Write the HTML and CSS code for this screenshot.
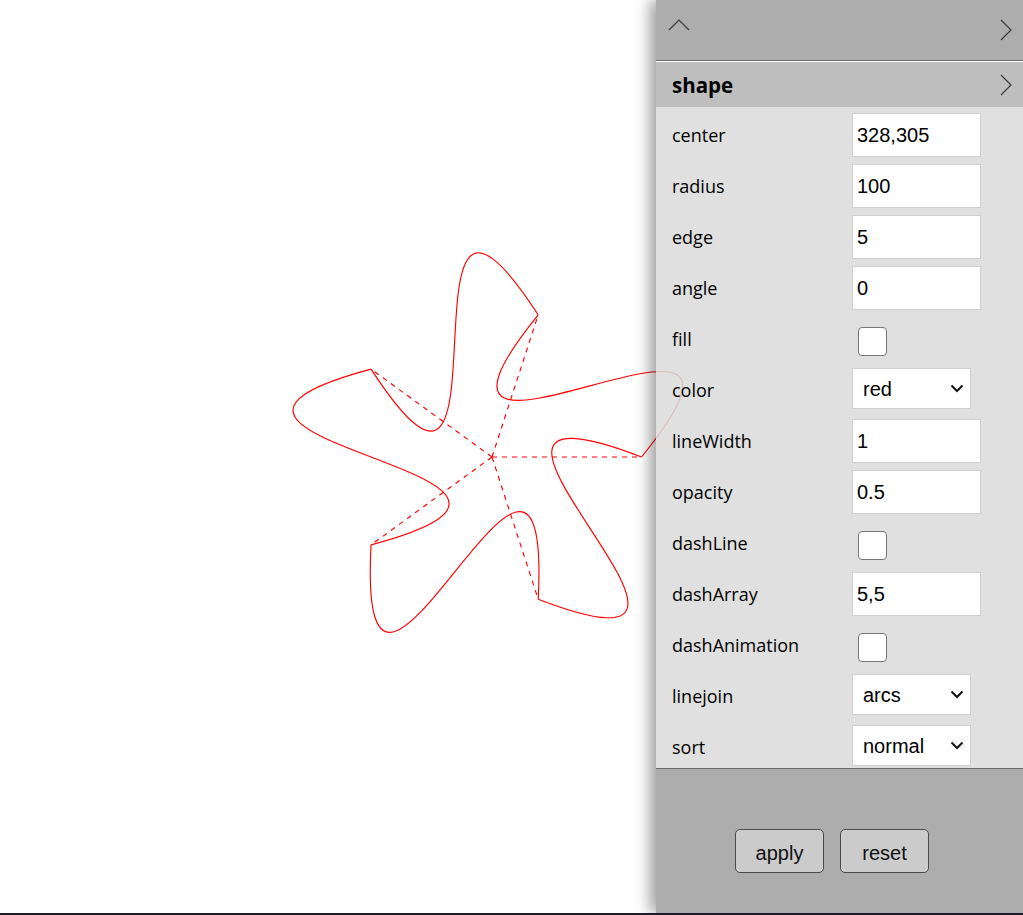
FILE: index.html
```html
<!DOCTYPE html>
<html lang="en">
<head>
<meta charset="utf-8">
<title>shape</title>
<link rel="stylesheet" href="styles.css">
</head>
<body>
<div class="stage">
  <svg class="canvas" width="1023" height="913" viewBox="0 0 1023 913">
    <defs>
      <path id="edge" d="M641.5 457 C380.1 356.7 799.6 699.5 538.2 599.2"/>
      <line id="spoke" x1="492" y1="457" x2="641.5" y2="457"/>
    </defs>
    <g class="outline">
      <use href="#edge"/>
      <use href="#edge" transform="rotate(72 492 457)"/>
      <use href="#edge" transform="rotate(144 492 457)"/>
      <use href="#edge" transform="rotate(216 492 457)"/>
      <use href="#edge" transform="rotate(288 492 457)"/>
    </g>
    <g class="spokes">
      <use href="#spoke"/>
      <use href="#spoke" transform="rotate(72 492 457)"/>
      <use href="#spoke" transform="rotate(144 492 457)"/>
      <use href="#spoke" transform="rotate(216 492 457)"/>
      <use href="#spoke" transform="rotate(288 492 457)"/>
    </g>
  </svg>

  <aside class="panel">
    <div class="topbar">
      <svg class="chev-up" width="22" height="12" viewBox="0 0 22 12"><polyline points="1,11 11,1 21,11"/></svg>
      <svg class="chev-right" width="12" height="22" viewBox="0 0 12 22"><polyline points="1,1 11,11 1,21"/></svg>
    </div>
    <div class="section-head">
      <span class="section-title">shape</span>
      <svg class="chev-right" width="12" height="22" viewBox="0 0 12 22"><polyline points="1,1 11,11 1,21"/></svg>
    </div>
    <div class="form">
      <div class="row"><label class="lbl">center</label><input class="txt" type="text" value="328,305"></div>
      <div class="row"><label class="lbl">radius</label><input class="txt" type="text" value="100"></div>
      <div class="row"><label class="lbl">edge</label><input class="txt" type="text" value="5"></div>
      <div class="row"><label class="lbl">angle</label><input class="txt" type="text" value="0"></div>
      <div class="row"><label class="lbl">fill</label><input class="chk" type="checkbox"></div>
      <div class="row"><label class="lbl">color</label>
        <span class="sel-wrap"><select class="sel"><option>red</option></select>
          <svg class="sel-arrow" width="14" height="9" viewBox="0 0 14 9"><polyline points="1.5,1.5 7,7 12.5,1.5"/></svg></span></div>
      <div class="row"><label class="lbl">lineWidth</label><input class="txt" type="text" value="1"></div>
      <div class="row"><label class="lbl">opacity</label><input class="txt" type="text" value="0.5"></div>
      <div class="row"><label class="lbl">dashLine</label><input class="chk" type="checkbox"></div>
      <div class="row"><label class="lbl">dashArray</label><input class="txt" type="text" value="5,5"></div>
      <div class="row"><label class="lbl">dashAnimation</label><input class="chk" type="checkbox"></div>
      <div class="row"><label class="lbl">linejoin</label>
        <span class="sel-wrap"><select class="sel"><option>arcs</option></select>
          <svg class="sel-arrow" width="14" height="9" viewBox="0 0 14 9"><polyline points="1.5,1.5 7,7 12.5,1.5"/></svg></span></div>
      <div class="row"><label class="lbl">sort</label>
        <span class="sel-wrap"><select class="sel"><option>normal</option></select>
          <svg class="sel-arrow" width="14" height="9" viewBox="0 0 14 9"><polyline points="1.5,1.5 7,7 12.5,1.5"/></svg></span></div>
    </div>
    <div class="actions">
      <button class="btn" type="button">apply</button>
      <button class="btn" type="button">reset</button>
    </div>
  </aside>
</div>
</body>
</html>
```

FILE: styles.css
```css
html {
  background: #1c1a2b;
}
body {
  margin: 0;
  height: 915px;
  overflow: hidden;
  background: #1c1a2b;
}
.stage {
  position: relative;
  width: 1023px;
  height: 913px;
  background: #ffffff;
  overflow: hidden;
}
.canvas {
  position: absolute;
  left: 0;
  top: 0;
  display: block;
}
.outline use {
  fill: none;
  stroke: #ff0000;
  stroke-width: 1.15;
}
.spokes use {
  fill: none;
  stroke: #ff0000;
  stroke-width: 1.15;
  stroke-dasharray: 5 5;
}

.panel {
  position: absolute;
  top: 0;
  right: 0;
  width: 367px;
  height: 913px;
  display: flex;
  flex-direction: column;
  box-shadow: -6px 0 14px rgba(0, 0, 0, 0.38);
  font-family: "Open Sans", "Noto Sans", sans-serif;
  color: #000;
}
.topbar {
  height: 61px;
  flex: none;
  box-sizing: border-box;
  background: rgba(159, 159, 159, 0.85);
  border-bottom: 1px solid #6b6b6b;
  display: flex;
  justify-content: space-between;
  align-items: flex-start;
  padding: 19px 11px 0 12px;
}
.chev-up polyline,
.chev-right polyline {
  fill: none;
  stroke: #3a3a3a;
  stroke-width: 1.2;
}
.chev-up {
  display: block;
}
.chev-right {
  display: block;
}
.section-head {
  height: 45px;
  flex: none;
  box-sizing: border-box;
  margin-top: 1px;
  background: rgba(179, 179, 179, 0.85);
  display: flex;
  align-items: center;
  justify-content: space-between;
  padding: 0 11px 0 16px;
}
.section-title {
  font-size: 20.5px;
  font-weight: 700;
  line-height: 1;
  padding-top: 2px;
}
.form {
  flex: 1;
  min-height: 0;
  overflow: hidden;
  background: rgba(218, 218, 218, 0.85);
  padding: 6px 0 0 16px;
}
.row {
  display: flex;
  align-items: flex-start;
  height: 44px;
  margin-bottom: 7px;
}
.lbl {
  width: 180px;
  flex: none;
  font-size: 18px;
  line-height: 44px;
}
.txt {
  width: 129px;
  height: 44px;
  box-sizing: border-box;
  margin: 0;
  border: 1px solid #cfcfcf;
  background: #fff;
  padding: 0 4px;
  font-family: "Liberation Sans", Arial, sans-serif;
  font-size: 20px;
  color: #000;
  outline: none;
}
.chk {
  appearance: none;
  -webkit-appearance: none;
  width: 29px;
  height: 29px;
  margin: 10px 0 0 6px;
  box-sizing: border-box;
  border: 1px solid #767676;
  border-radius: 4px;
  background: #fff;
}
.sel-wrap {
  position: relative;
  display: block;
  width: 119px;
  height: 41px;
}
.sel {
  appearance: none;
  -webkit-appearance: none;
  display: block;
  width: 119px;
  height: 41px;
  box-sizing: border-box;
  margin: 0;
  border: 1px solid #cfcfcf;
  border-radius: 0;
  background: #fff;
  padding: 0 0 0 10px;
  font-family: "Liberation Sans", Arial, sans-serif;
  font-size: 20px;
  color: #000;
  outline: none;
}
.sel-arrow {
  position: absolute;
  left: 98px;
  top: 16px;
  pointer-events: none;
}
.sel-arrow polyline {
  fill: none;
  stroke: #111;
  stroke-width: 2;
}
.actions {
  height: 145px;
  flex: none;
  box-sizing: border-box;
  border-top: 1px solid #6b6b6b;
  background: rgba(159, 159, 159, 0.85);
  display: flex;
  justify-content: center;
  align-items: flex-start;
  gap: 16px;
  padding: 60px 15px 0 0;
}
.btn {
  width: 89px;
  height: 44px;
  margin: 0;
  box-sizing: border-box;
  border: 1px solid #4a4a4a;
  border-radius: 5px;
  background: #cbcbcb;
  font-family: "Liberation Sans", Arial, sans-serif;
  font-size: 20px;
  color: #111;
  padding: 5px 0 0 0;
}
```
